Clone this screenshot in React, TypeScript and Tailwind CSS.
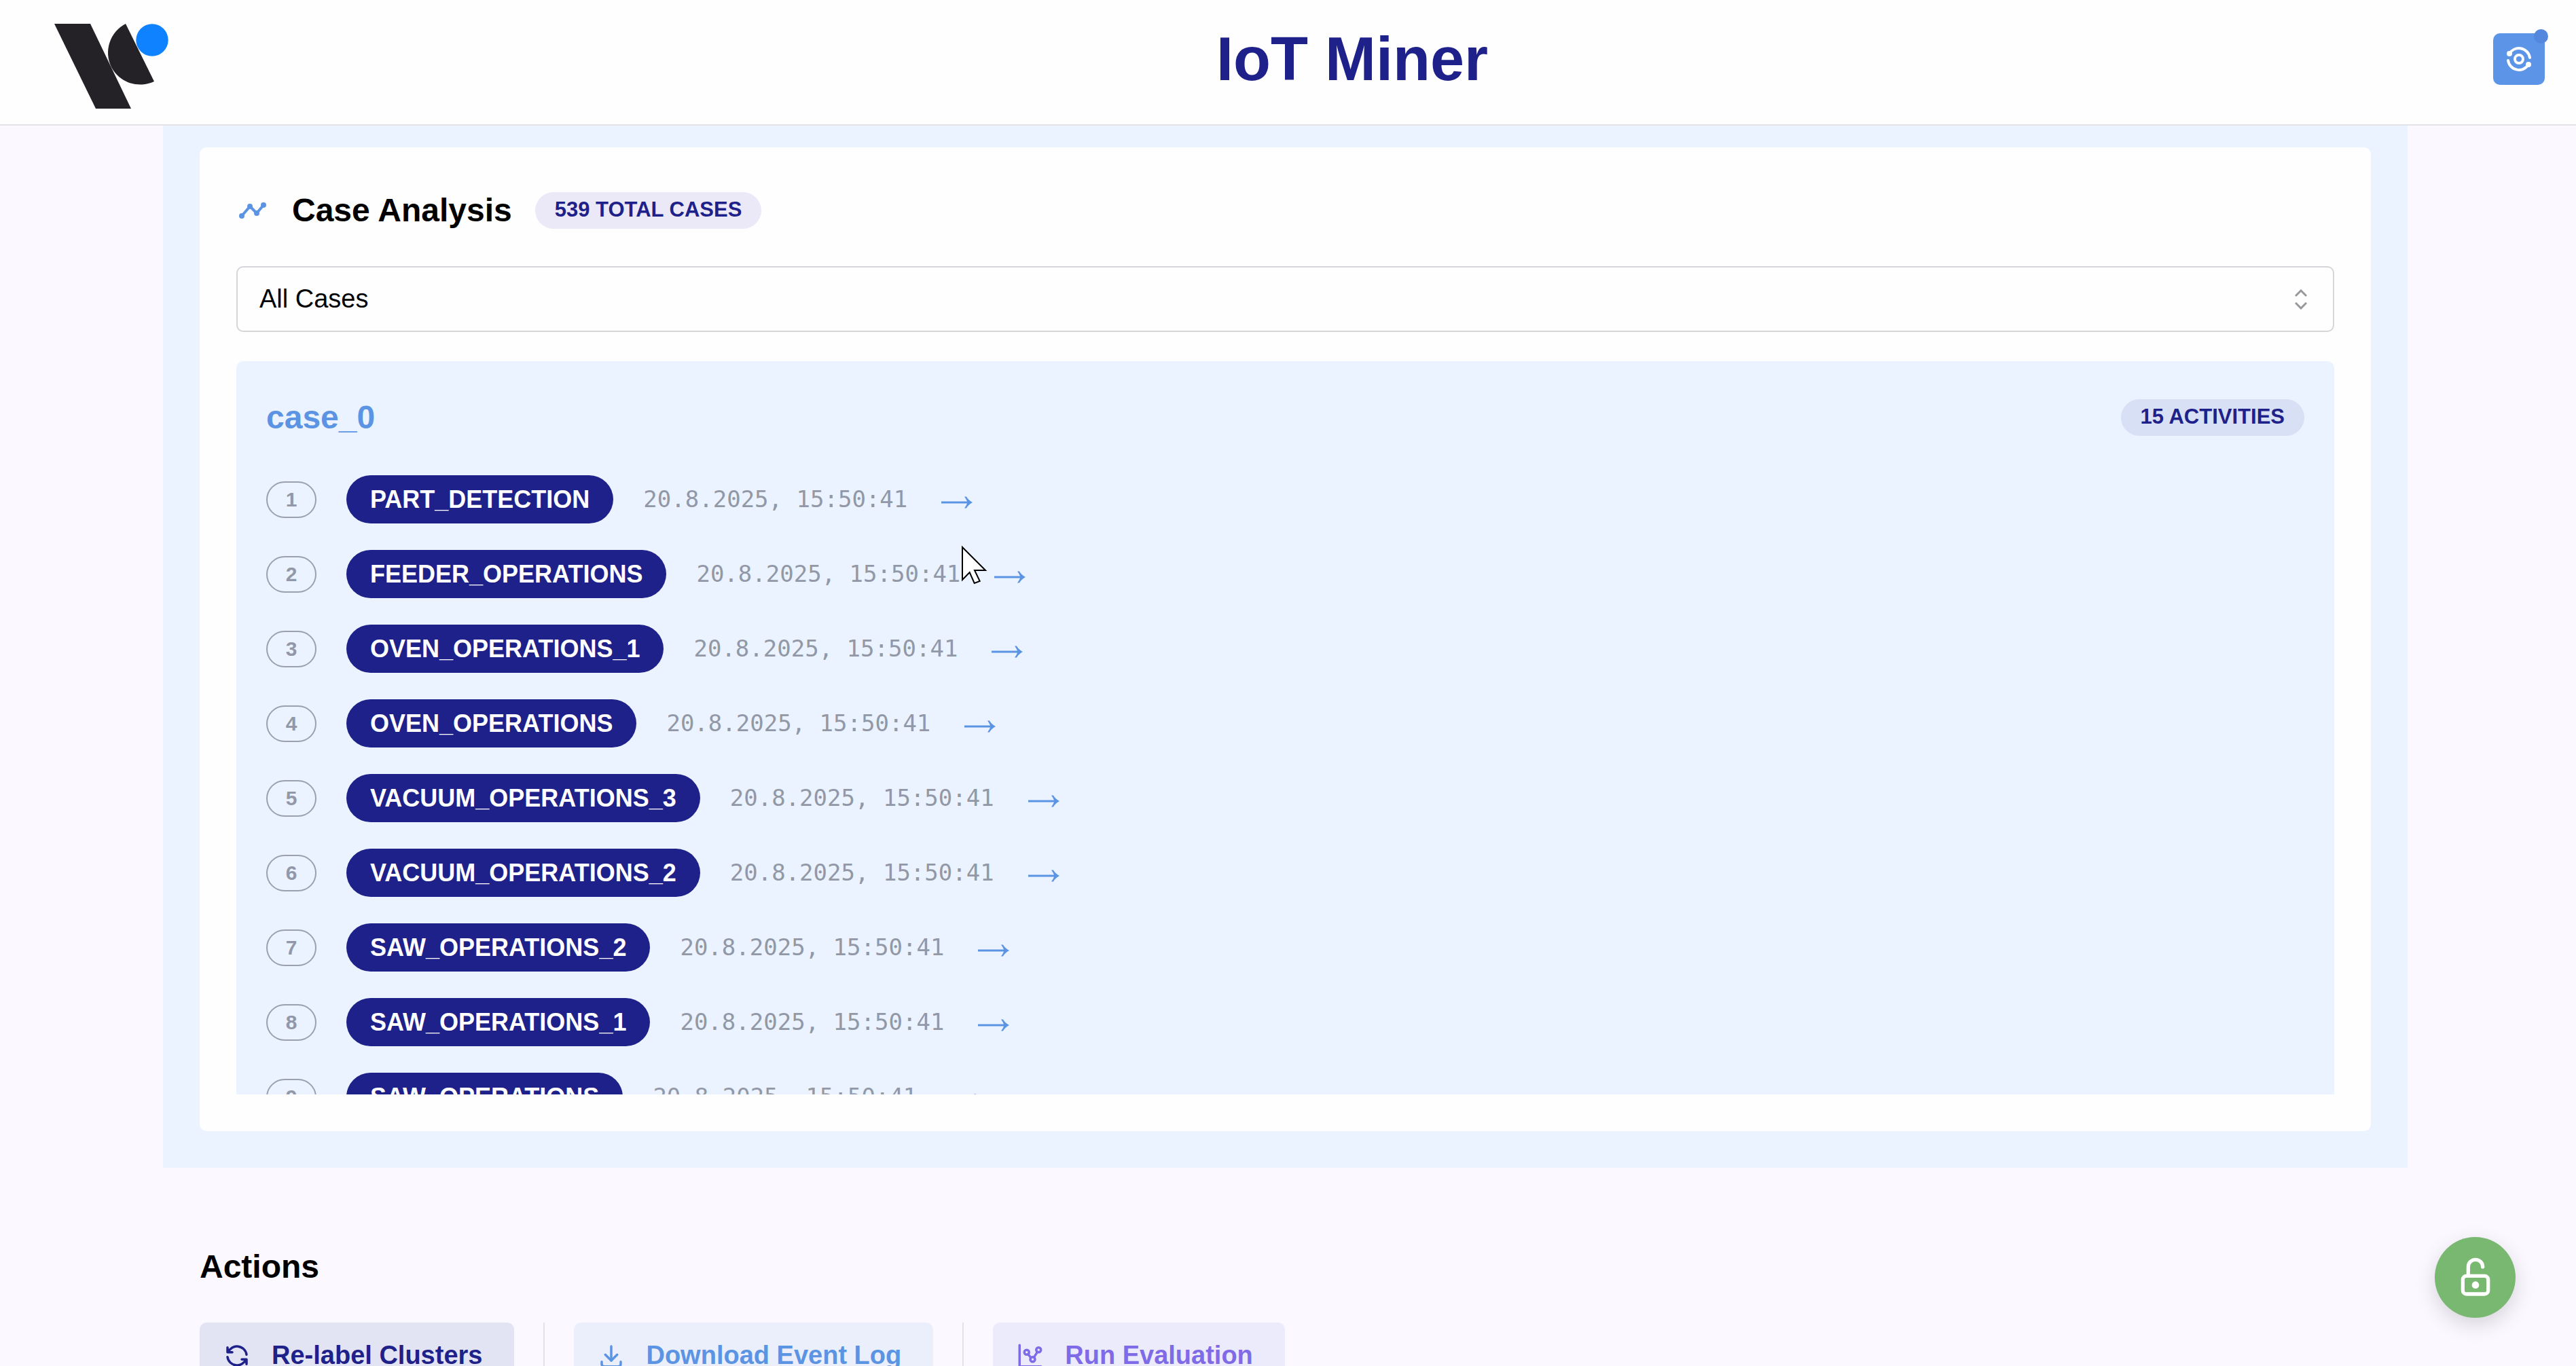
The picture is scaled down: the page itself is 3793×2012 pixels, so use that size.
import {
  TbAnalyze,
  TbChartDots,
  TbDownload,
  TbLockOpen,
  TbRefresh,
  TbTimeline,
} from "react-icons/tb";
import type { IconType } from "react-icons";
import clsx from "clsx";

const ACTIVITIES = [
  "PART_DETECTION",
  "FEEDER_OPERATIONS",
  "OVEN_OPERATIONS_1",
  "OVEN_OPERATIONS",
  "VACUUM_OPERATIONS_3",
  "VACUUM_OPERATIONS_2",
  "SAW_OPERATIONS_2",
  "SAW_OPERATIONS_1",
  "SAW_OPERATIONS",
];

const TIMESTAMP = "20.8.2025, 15:50:41";

const ACTIONS: { label: string; icon: IconType; className: string }[] = [
  { label: "Re-label Clusters", icon: TbRefresh, className: "bg-[#e3e4f3] text-[#1f218a]" },
  { label: "Download Event Log", icon: TbDownload, className: "bg-[#ebeffb] text-[#5c94e4]" },
  { label: "Run Evaluation", icon: TbChartDots, className: "bg-[#ecebfb] text-[#7f6be8]" },
];

function Logo() {
  return (
    <svg viewBox="0 -21 231 147" className="h-[147px] w-[231px]" aria-label="Logo" role="img">
      <path d="M0 0H53L113 125H61Z" fill="#242127" />
      <path d="M105 0L147 85A48 48 0 0 1 84 64A48 48 0 0 1 105 0Z" fill="#242127" />
      <circle cx="144" cy="24" r="23.7" fill="#0f82ff" />
    </svg>
  );
}

function Header() {
  return (
    <header className="flex h-[185px] shrink-0 items-center justify-between border-b-2 border-[#e2e3e9] bg-[#fefefe] pr-[46px] pb-[9px] pl-[80px]">
      <Logo />
      <h1 className="text-[90px] leading-none font-bold text-[#1f218a]">IoT Miner</h1>
      <button
        type="button"
        aria-label="Analyze"
        className="relative flex size-[76px] items-center justify-center rounded-[10px] bg-[#5c94e8] text-white"
      >
        <TbAnalyze className="size-[48px]" />
        <span className="absolute -top-[6px] -right-[5px] size-[21px] rounded-full bg-[#5487de]" />
      </button>
    </header>
  );
}

function CountBadge({ children, className }: { children: string; className: string }) {
  return (
    <span
      className={clsx(
        "flex h-[54px] items-center rounded-full px-[29px] text-[31px] font-bold whitespace-nowrap text-[#1f218a]",
        className,
      )}
    >
      {children}
    </span>
  );
}

function Arrow() {
  return (
    <svg viewBox="0 0 46 18" className="mt-[8px] h-[18px] w-[46px]" fill="#5c94e4">
      <path d="M34 .5H37Q40 6 46 9Q40 12 37 17.5H34Q37 13.500 38 10.500H0V7.500H38Q37 4.500 34 .5Z" />
    </svg>
  );
}

function ActivityRow({ index, name }: { index: number; name: string }) {
  return (
    <li className="flex h-[77px] items-center gap-[44px]">
      <span className="flex h-[54px] w-[74px] items-center justify-center rounded-full border-2 border-[#9aa0af] text-[30px] font-bold text-[#9298a8]">
        {index}
      </span>
      <span className="flex h-[71px] items-center rounded-full bg-[#1f218a] px-[35px] text-[36px] font-bold text-white">
        {name}
      </span>
      <span className="w-[395px] font-['DejaVu_Sans_Mono',monospace] text-[34px] whitespace-nowrap text-[#9298a6]">
        {TIMESTAMP}
      </span>
      <Arrow />
    </li>
  );
}

function CaseSelect() {
  return (
    <div className="relative mt-[44px]">
      <select
        aria-label="Case"
        className="h-[97px] w-full appearance-none rounded-[10px] border-2 border-[#d6d6da] bg-[#fefefe] px-[32px] text-[38px] text-black"
      >
        <option>All Cases</option>
      </select>
      <svg
        viewBox="0 0 18 30"
        className="pointer-events-none absolute top-[34px] right-[40px] h-[30px] w-[18px]"
        fill="none"
        stroke="#98989c"
        strokeWidth="3"
      >
        <path d="M1 10L9 2L17 10M1 20L9 28L17 20" />
      </svg>
    </div>
  );
}

function CaseAnalysis() {
  return (
    <section className="bg-[#eaf3ff] px-[54px] pt-[32px] pb-[54px]">
      <div className="rounded-[10px] bg-[#fefefe] p-[54px]">
        <div className="flex h-[77px] items-center gap-[34px]">
          <TbTimeline className="size-[48px] text-[#5c94e4]" />
          <h2 className="text-[48px] font-bold text-black">Case Analysis</h2>
          <CountBadge className="bg-[#ebe9f7]">539 TOTAL CASES</CountBadge>
        </div>
        <CaseSelect />
        <div className="mt-[43px] h-[1080px] overflow-hidden">
          <div className="rounded-[10px] bg-[#eaf3ff] p-[44px]">
            <div className="flex h-[77px] items-center justify-between">
              <h3 className="text-[48px] font-bold text-[#5c94e4]">case_0</h3>
              <CountBadge className="bg-[#d7e0f4]">15 ACTIVITIES</CountBadge>
            </div>
            <ol className="mt-[44px] flex flex-col gap-[33px]">
              {ACTIVITIES.map((name, i) => (
                <ActivityRow key={name} index={i + 1} name={name} />
              ))}
            </ol>
          </div>
        </div>
      </div>
    </section>
  );
}

function Actions() {
  return (
    <section className="mt-[107px] px-[54px]">
      <h2 className="flex h-[77px] items-center text-[48px] font-bold text-black">Actions</h2>
      <div className="mt-[44px] flex gap-[43px]">
        {ACTIONS.map(({ label, icon: Icon, className }, i) => (
          <div key={label} className="flex gap-[43px]">
            {i > 0 && <span className="w-[2px] bg-[#e2e2e8]" />}
            <button
              type="button"
              className={clsx(
                "flex h-[97px] items-center gap-[30px] rounded-[10px] pr-[47px] pl-[34px] text-[38px] font-bold",
                className,
              )}
            >
              <Icon className="size-[42px]" />
              {label}
            </button>
          </div>
        ))}
      </div>
    </section>
  );
}

function Cursor() {
  return (
    <svg
      viewBox="0 0 39 58"
      className="pointer-events-none absolute top-[803px] left-[1415px] h-[58px] w-[39px]"
      fill="#fff"
      stroke="#000"
      strokeWidth="2"
    >
      <path d="M2 3V51L12.700 40L19.700 56L27.700 53L20 37H36Z" />
    </svg>
  );
}

export default function App() {
  return (
    <div className="relative flex h-screen flex-col overflow-hidden bg-[#fbf9ff] font-['Liberation_Sans',Arial,sans-serif]">
      <Header />
      <main className="min-h-0 flex-1 overflow-hidden pr-[248px] pl-[240px]">
        <CaseAnalysis />
        <Actions />
      </main>
      <button
        type="button"
        aria-label="Unlock"
        className="absolute right-[89px] bottom-[71px] flex size-[119px] items-center justify-center rounded-full bg-[#78b870] text-white shadow-[0_10px_30px_rgba(0,0,0,0.15)]"
      >
        <TbLockOpen className="size-[64px]" />
      </button>
      <Cursor />
    </div>
  );
}
